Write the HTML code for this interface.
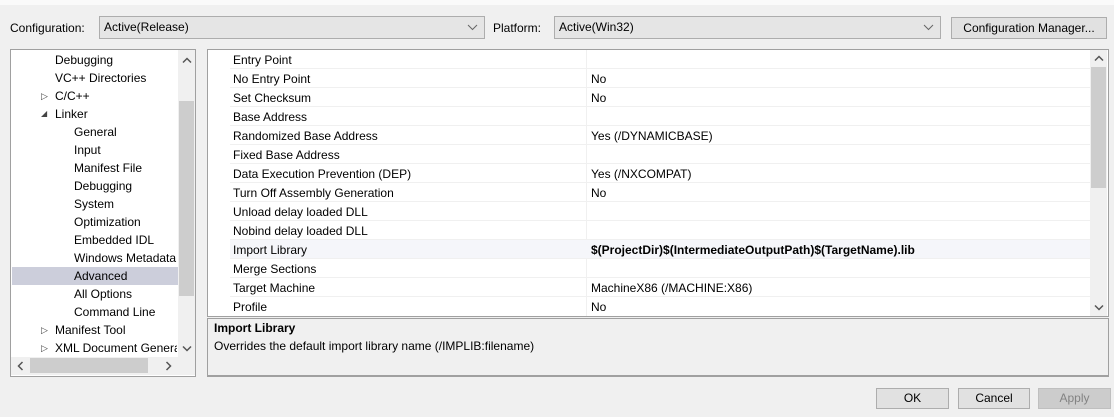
<!DOCTYPE html>
<html><head><meta charset="utf-8"><style>
*{margin:0;padding:0;box-sizing:border-box}
body{width:1114px;height:417px;background:#f0f0f0;font-family:"Liberation Sans",sans-serif;font-size:12px;color:#000;position:relative;overflow:hidden}
.a{position:absolute;white-space:nowrap}
.combo{position:absolute;background:#e5e5e5;border:1px solid #adadad;height:23px;line-height:21px;padding-left:4px}
.btn{position:absolute;background:#e1e1e1;border:1px solid #adadad;text-align:center;line-height:19px;height:21px}
.chev{position:absolute;right:7px;top:8px}
.tree div{position:absolute;height:18px;line-height:18px;white-space:nowrap}
.row{position:absolute;left:22px;width:861px;height:19px;border-bottom:1px solid #f0f0f0;line-height:20px}
.row span{position:absolute;left:3px}
.row .v{left:361px}
.sep{position:absolute;left:378px;top:0;width:1px;height:266px;background:#f0f0f0}
svg{position:absolute;overflow:visible}
</style></head><body>
<div class="a" style="left:0;top:0;width:1114px;height:5px;background:#fafafa"></div>
<div class="a" style="left:10px;top:21px">Configuration:</div>
<div class="combo" style="left:99px;top:16px;width:386px">Active(Release)<svg class="chev" width="9" height="5"><path d="M0 0L4.5 4.5L9 0" fill="none" stroke="#666"/></svg></div>
<div class="a" style="left:493px;top:21px">Platform:</div>
<div class="combo" style="left:554px;top:16px;width:387px">Active(Win32)<svg class="chev" width="9" height="5"><path d="M0 0L4.5 4.5L9 0" fill="none" stroke="#666"/></svg></div>
<div class="btn" style="left:951px;top:17px;width:156px;height:22px;line-height:20px">Configuration Manager...</div>

<div class="a tree" style="left:10px;top:49px;width:186px;height:328px;background:#fff;border:1px solid #a0a0a0">
<div style="left:44px;top:1px">Debugging</div>
<div style="left:44px;top:19px">VC++ Directories</div>
<div style="left:30px;top:37px;font-size:9px;color:#444">&#9655;</div><div style="left:44px;top:37px">C/C++</div>
<div style="left:30px;top:55px;font-size:8px;color:#444">&#9698;</div><div style="left:44px;top:55px">Linker</div>
<div style="left:63px;top:73px">General</div>
<div style="left:63px;top:91px">Input</div>
<div style="left:63px;top:109px">Manifest File</div>
<div style="left:63px;top:127px">Debugging</div>
<div style="left:63px;top:145px">System</div>
<div style="left:63px;top:163px">Optimization</div>
<div style="left:63px;top:181px">Embedded IDL</div>
<div style="left:63px;top:199px">Windows Metadata</div>
<div style="left:1px;top:217px;width:166px;background:#cccedb"></div><div style="left:63px;top:217px">Advanced</div>
<div style="left:63px;top:235px">All Options</div>
<div style="left:63px;top:253px">Command Line</div>
<div style="left:30px;top:271px;font-size:9px;color:#444">&#9655;</div><div style="left:44px;top:271px">Manifest Tool</div>
<div style="left:30px;top:289px;font-size:9px;color:#444">&#9655;</div><div style="left:44px;top:289px;width:122px;overflow:hidden">XML Document Generator</div>
<div style="left:167px;top:0;width:17px;height:307px;background:#f0f0f0"></div>
<div style="left:168px;top:51px;width:15px;height:195px;background:#cdcdcd"></div>
<svg style="left:172px;top:8px" width="8" height="5"><path d="M0 4.5L4 0.5L8 4.5" fill="none" stroke="#555" stroke-width="1.5"/></svg>
<svg style="left:172px;top:296px" width="8" height="5"><path d="M0 0.5L4 4.5L8 0.5" fill="none" stroke="#555" stroke-width="1.5"/></svg>
<div style="left:0;top:307px;width:184px;height:18px;background:#f0f0f0"></div>
<div style="left:19px;top:308px;width:118px;height:15px;background:#cdcdcd"></div>
<svg style="left:7px;top:312px" width="5" height="8"><path d="M4.5 0L0.5 4L4.5 8" fill="none" stroke="#555" stroke-width="1.5"/></svg>
<svg style="left:155px;top:312px" width="5" height="8"><path d="M0.5 0L4.5 4L0.5 8" fill="none" stroke="#555" stroke-width="1.5"/></svg>
</div>

<div class="a" style="left:207px;top:49px;width:902px;height:268px;background:#fff;border:1px solid #a0a0a0">
<div class="sep"></div>
<div class="row" style="top:0"><span>Entry Point</span></div>
<div class="row" style="top:19px"><span>No Entry Point</span><span class="v">No</span></div>
<div class="row" style="top:38px"><span>Set Checksum</span><span class="v">No</span></div>
<div class="row" style="top:57px"><span>Base Address</span></div>
<div class="row" style="top:76px"><span>Randomized Base Address</span><span class="v">Yes (/DYNAMICBASE)</span></div>
<div class="row" style="top:95px"><span>Fixed Base Address</span></div>
<div class="row" style="top:114px"><span>Data Execution Prevention (DEP)</span><span class="v">Yes (/NXCOMPAT)</span></div>
<div class="row" style="top:133px"><span>Turn Off Assembly Generation</span><span class="v">No</span></div>
<div class="row" style="top:152px"><span>Unload delay loaded DLL</span></div>
<div class="row" style="top:171px"><span>Nobind delay loaded DLL</span></div>
<div class="row" style="top:190px;background:#f5f6fa"><span>Import Library</span><span class="v" style="font-weight:bold">$(ProjectDir)$(IntermediateOutputPath)$(TargetName).lib</span></div>
<div class="row" style="top:209px"><span>Merge Sections</span></div>
<div class="row" style="top:228px"><span>Target Machine</span><span class="v">MachineX86 (/MACHINE:X86)</span></div>
<div class="row" style="top:247px;border:0"><span>Profile</span><span class="v">No</span></div>
<div class="a" style="left:882px;top:0;width:17px;height:266px;background:#f0f0f0"></div>
<div class="a" style="left:883px;top:17px;width:15px;height:121px;background:#cdcdcd"></div>
<svg style="left:887px;top:6px" width="8" height="5"><path d="M0 4.5L4 0.5L8 4.5" fill="none" stroke="#555" stroke-width="1.5"/></svg>
<svg style="left:887px;top:255px" width="8" height="5"><path d="M0 0.5L4 4.5L8 0.5" fill="none" stroke="#555" stroke-width="1.5"/></svg>
</div>

<div class="a" style="left:207px;top:318px;width:902px;height:59px;border:1px solid #a0a0a0;border-bottom:2px solid #a0a0a0">
<div class="a" style="left:6px;top:2px;font-weight:bold">Import Library</div>
<div class="a" style="left:6px;top:20px">Overrides the default import library name (/IMPLIB:filename)</div>
</div>

<div class="btn" style="left:876px;top:388px;width:73px">OK</div>
<div class="btn" style="left:958px;top:388px;width:72px">Cancel</div>
<div class="btn" style="left:1038px;top:388px;width:73px;background:#cccccc;border-color:#bfbfbf;color:#838383">Apply</div>
</body></html>
